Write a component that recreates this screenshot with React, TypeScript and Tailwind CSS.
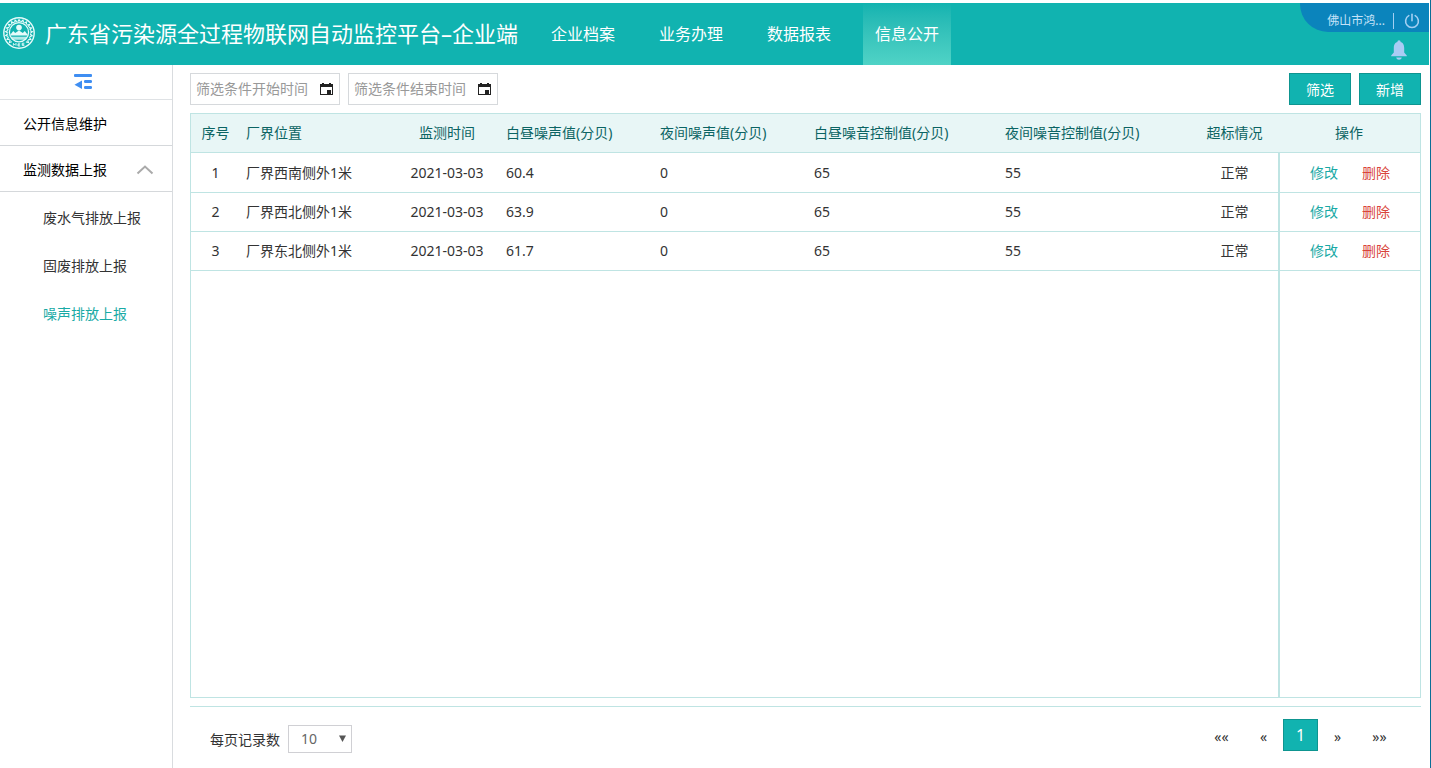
import React, { useState } from 'react';

const NAV = ['企业档案', '业务办理', '数据报表', '信息公开'];
const REPORTS = ['废水气排放上报', '固废排放上报', '噪声排放上报'];

const ROWS = [
  { id: 1, place: '厂界西南侧外1米', date: '2021-03-03', day: '60.4', night: '0', dayLimit: '65', nightLimit: '55', state: '正常' },
  { id: 2, place: '厂界西北侧外1米', date: '2021-03-03', day: '63.9', night: '0', dayLimit: '65', nightLimit: '55', state: '正常' },
  { id: 3, place: '厂界东北侧外1米', date: '2021-03-03', day: '61.7', night: '0', dayLimit: '65', nightLimit: '55', state: '正常' },
];

function Emblem() {
  const leaves = Array.from({ length: 17 }, (_, i) => 135 + i * 16.9);
  return (
    <svg className="size-8 shrink-0" viewBox="0 0 32 32" fill="none" stroke="#e6fbfa" aria-hidden="true">
      <circle cx="16" cy="16" r="15.2" strokeWidth="1.4" />
      {leaves.map((a) => (
        <path
          key={a}
          d="M27.2 14.8 L29.4 16 L27.2 17.4"
          strokeWidth="1.2"
          transform={`rotate(${a} 16 16)`}
        />
      ))}
      <circle cx="16" cy="15.2" r="9.6" strokeWidth="1.3" />
      <circle cx="16" cy="10.6" r="2.8" fill="#e6fbfa" stroke="none" />
      <path d="M6.8 18.4 L10.2 14 L12.2 16 L16 13.4 L19.8 16 L21.8 14 L25.2 18.4 Z" fill="#e6fbfa" stroke="none" />
      <path d="M7.6 19.8 H24.4 L22 22.8 H10 Z" fill="#e6fbfa" fillOpacity="0.75" stroke="none" />
      <path d="M10.4 28.6 V26.4 L11.7 27.8 L13 26.4 V28.6 M17.2 26.8 H15 V29 H17.2 M15 27.9 H17 M21.4 26.2 H19.2 V28.4 H21.4 M19.2 27.3 H21.2" strokeWidth="0.9" />
    </svg>
  );
}

function CollapseIcon() {
  return (
    <svg className="h-4 w-[18px]" viewBox="0 0 18 16" fill="#3f8ef2" aria-hidden="true">
      <rect x="0" y="0" width="18" height="3" rx="1" />
      <path d="M0.5 10.8 L8 6.6 V15 Z" />
      <rect x="10" y="6" width="8" height="3" rx="1.2" />
      <rect x="10" y="12" width="8" height="3" rx="1.2" />
    </svg>
  );
}

function CalendarIcon() {
  return (
    <svg className="h-3 w-[13px]" viewBox="0 0 13 12" fill="#222" aria-hidden="true">
      <path fillRule="evenodd" d="M0 1 H2 V0 H4 V1 H9 V0 H11 V1 H13 V12 H0 Z M1 4 V11 H12 V4 Z" />
      <rect x="7" y="7" width="4" height="4" />
    </svg>
  );
}

function PowerIcon() {
  return (
    <svg className="size-4" viewBox="0 0 16 16" fill="none" stroke="#a3cff2" strokeWidth="1.6" strokeLinecap="round" aria-hidden="true">
      <path d="M8 1.2 V7.8" />
      <path d="M4.8 2.6 A6.4 6.4 0 1 0 11.2 2.6" />
    </svg>
  );
}

function BellIcon() {
  return (
    <svg className="h-5 w-4" viewBox="0 0 16 20" fill="#a9ccf4" aria-hidden="true">
      <circle cx="8" cy="1.8" r="1.6" />
      <path d="M8 1.8 C11.6 1.8 13.2 4.6 13.2 8 V12.5 L15.8 15.6 V16.2 H0.2 V15.6 L2.8 12.5 V8 C2.8 4.6 4.4 1.8 8 1.8 Z" />
      <path d="M5.2 17.6 H10.8 C10.4 19 9.4 19.8 8 19.8 C6.6 19.8 5.6 19 5.2 17.6 Z" />
    </svg>
  );
}

function DateField({ label }: { label: string }) {
  return (
    <label className="relative block w-[150px]">
      <input
        type="text"
        aria-label={label}
        placeholder={label}
        className="block h-8 w-full border border-[#d6d9dc] bg-white pr-7 pb-0.5 pl-[5px] text-sm text-[#444] outline-none placeholder:text-[#999]"
      />
      <span className="pointer-events-none absolute top-2.5 right-[7px]">
        <CalendarIcon />
      </span>
    </label>
  );
}

function ActionButton({ children }: { children: React.ReactNode }) {
  return (
    <button type="button" className="h-8 w-[62px] border border-[#0e9590] bg-[#11b3b0] pt-0.5 text-sm text-white">
      {children}
    </button>
  );
}

function Header() {
  return (
    <header className="flex h-[62px] bg-[#11b3b0] text-white">
      <div className="flex min-w-0 flex-1 items-stretch">
        <div className="flex shrink-0 items-center gap-2.5 pb-0.5 pl-[3px]">
          <Emblem />
          <h1 className="text-[22px] leading-8 whitespace-nowrap">广东省污染源全过程物联网自动监控平台–企业端</h1>
        </div>
        <nav className="ml-[21px] flex shrink-0 gap-5">
          {NAV.map((item) => (
            <a
              key={item}
              href="#"
              className={
                item === '信息公开'
                  ? 'flex items-center bg-linear-to-b from-[#11b3b0] to-[#4fd3c6] px-3 text-base'
                  : 'flex items-center px-3 text-base'
              }
            >
              {item}
            </a>
          ))}
        </nav>
      </div>
      <div className="flex shrink-0 flex-col items-end">
        <div className="flex h-[29px] w-[129px] items-center justify-end rounded-bl-[28px] bg-[#0b84bc] pt-1.5 pr-[9px]">
          <span className="text-xs text-[#c4e2f8]">佛山市鸿...</span>
          <span className="mr-2.5 ml-2 h-4 w-px bg-[#a3cff2]" />
          <button type="button" aria-label="退出">
            <PowerIcon />
          </button>
        </div>
        <button type="button" aria-label="消息" className="mt-2 mr-[22px]">
          <BellIcon />
        </button>
      </div>
    </header>
  );
}

function Sidebar() {
  return (
    <aside className="w-[173px] shrink-0 border-r border-[#d9dcdf] text-sm">
      <button type="button" aria-label="收起菜单" className="flex h-[35px] w-full justify-center border-b border-[#dfe2e5] pt-[9px] pr-1.5">
        <CollapseIcon />
      </button>
      <a href="#" className="flex h-[46px] items-center border-b border-[#d5d8db] pt-0.5 pl-[23px] text-black">
        公开信息维护
      </a>
      <a href="#" className="flex h-[46px] items-center justify-between border-b border-[#d5d8db] pt-0.5 pr-[18px] pl-[23px] text-black">
        监测数据上报
        <svg className="h-2.5 w-[18px]" viewBox="0 0 18 10" fill="none" stroke="#aaa" strokeWidth="2" aria-hidden="true">
          <path d="M1.5 8.5 L9 1.5 L16.5 8.5" />
        </svg>
      </a>
      <ul className="pt-0.5">
        {REPORTS.map((item) => (
          <li key={item}>
            <a
              href="#"
              className={
                item === '噪声排放上报'
                  ? 'flex h-12 items-center pl-[43px] text-[#19aaa5]'
                  : 'flex h-12 items-center pl-[43px] text-[#333]'
              }
            >
              {item}
            </a>
          </li>
        ))}
      </ul>
    </aside>
  );
}

function NoiseTable() {
  return (
    <div className="flex flex-1 flex-col border border-[#bfe4e3]">
      <table className="w-full table-fixed border-separate border-spacing-0 text-sm text-[#333]">
        <colgroup>
          <col className="w-[49px]" />
          <col className="w-[154px]" />
          <col className="w-[106px]" />
          <col className="w-[154px]" />
          <col className="w-[154px]" />
          <col className="w-[191px]" />
          <col />
          <col className="w-[87px]" />
          <col className="w-[142px]" />
        </colgroup>
        <thead>
          <tr className="h-[39px] bg-[#e8f6f6] text-left text-[#0b6463] *:border-b *:border-[#bfe4e3] *:px-1.5 *:font-normal">
            <th className="text-center">序号</th>
            <th>厂界位置</th>
            <th className="text-center">监测时间</th>
            <th>白昼噪声值(分贝)</th>
            <th>夜间噪声值(分贝)</th>
            <th>白昼噪音控制值(分贝)</th>
            <th>夜间噪音控制值(分贝)</th>
            <th className="text-center">超标情况</th>
            <th className="text-center">操作</th>
          </tr>
        </thead>
        <tbody>
          {ROWS.map((row) => (
            <tr key={row.id} className="h-[39px] *:border-b *:border-[#bfe4e3] *:px-1.5 first:h-10">
              <td className="text-center">{row.id}</td>
              <td>{row.place}</td>
              <td className="text-center">{row.date}</td>
              <td>{row.day}</td>
              <td>{row.night}</td>
              <td>{row.dayLimit}</td>
              <td>{row.nightLimit}</td>
              <td className="text-center">{row.state}</td>
              <td className="border-l-2">
                <div className="flex justify-center gap-6">
                  <a href="#" className="text-[#19a9a5]">修改</a>
                  <a href="#" className="text-[#d9443c]">删除</a>
                </div>
              </td>
            </tr>
          ))}
        </tbody>
      </table>
      <div className="flex flex-1 justify-end">
        <div className="w-[142px] border-l-2 border-[#bfe4e3]" />
      </div>
    </div>
  );
}

function Pager() {
  const [size, setSize] = useState('10');
  return (
    <footer className="mt-2 flex h-[62px] items-start justify-between border-t border-[#bfe4e3] text-sm text-[#333]">
      <div className="mt-[18px] ml-5 flex items-center gap-2">
        <label htmlFor="page-size" className="pt-0.5">每页记录数</label>
        <div className="relative">
          <select
            id="page-size"
            value={size}
            onChange={(e) => setSize(e.target.value)}
            className="block h-7 w-16 appearance-none border border-[#d0d0d4] bg-white pl-3 text-sm text-[#666]"
          >
            <option>10</option>
            <option>20</option>
            <option>50</option>
          </select>
          <svg className="pointer-events-none absolute top-2.5 right-1.5 h-[7px] w-[7px]" viewBox="0 0 7 7" fill="#555" aria-hidden="true">
            <path d="M0 0.5 H7 L3.5 7 Z" />
          </svg>
        </div>
      </div>
      <div className="mt-3 mr-[19px] flex h-8 text-sm">
        <button type="button" aria-label="首页" className="w-[45px] pt-1">««</button>
        <button type="button" aria-label="上一页" className="w-[39px] pt-1">«</button>
        <button type="button" aria-current="page" className="w-[35px] border border-[#0e9590] bg-[#11b3b0] text-base text-white">1</button>
        <button type="button" aria-label="下一页" className="w-[39px] pt-1">»</button>
        <button type="button" aria-label="末页" className="w-[45px] pt-1">»»</button>
      </div>
    </footer>
  );
}

export default function App() {
  return (
    <div className="flex min-h-screen flex-col border-r border-[#0a6e96] bg-white pt-[3px] pr-px font-['Noto_Sans','Noto_Sans_CJK_SC',sans-serif]">
      <Header />
      <div className="flex flex-1">
        <Sidebar />
        <main className="flex min-w-0 flex-1 flex-col pt-2 pr-2 pl-[17px]">
          <div className="mb-2 flex justify-between">
            <div className="flex gap-2">
              <DateField label="筛选条件开始时间" />
              <DateField label="筛选条件结束时间" />
            </div>
            <div className="flex gap-2">
              <ActionButton>筛选</ActionButton>
              <ActionButton>新增</ActionButton>
            </div>
          </div>
          <NoiseTable />
          <Pager />
        </main>
      </div>
    </div>
  );
}
